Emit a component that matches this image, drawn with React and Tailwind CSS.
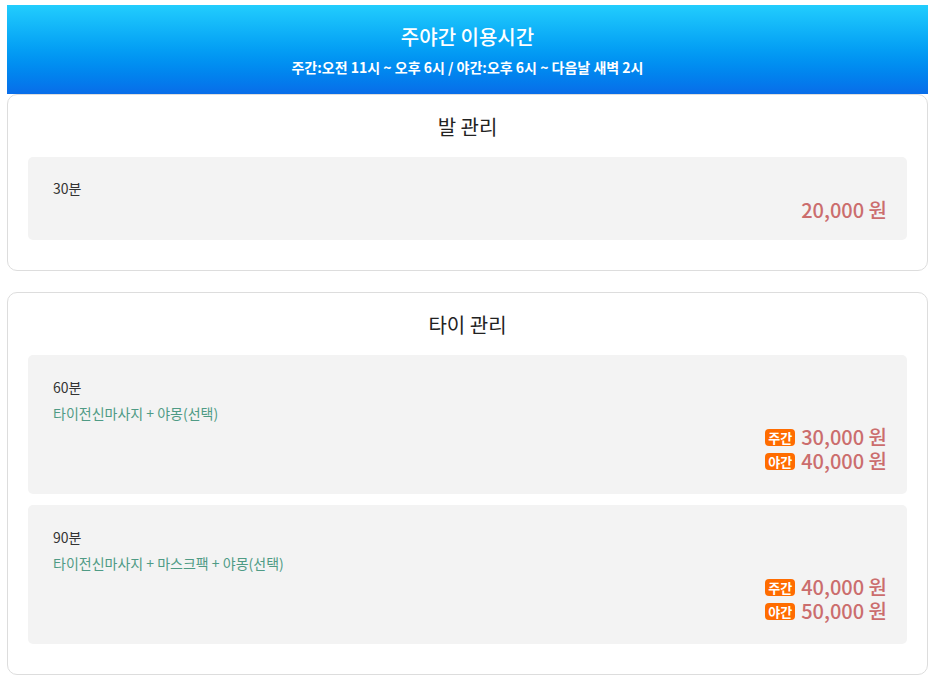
import React from 'react';

const font = { fontFamily: '"Noto Sans CJK KR", "Noto Sans", sans-serif' };

const sections = [
  {
    title: '발 관리',
    items: [{ time: '30분', price: '20,000 원' }],
  },
  {
    title: '타이 관리',
    items: [
      { time: '60분', desc: '타이전신마사지 + 야몽(선택)', day: '30,000 원', night: '40,000 원' },
      { time: '90분', desc: '타이전신마사지 + 마스크팩 + 야몽(선택)', day: '40,000 원', night: '50,000 원' },
    ],
  },
];

const Badge = ({ children }) => (
  <span className="inline-flex items-center justify-center h-[17px] px-[3px] mr-[6px] rounded-[4px] bg-[#ff6c00] text-white text-[13px] font-bold leading-[17px]">
    {children}
  </span>
);

const PriceLine = ({ badge, value }) => (
  <div className="flex items-center justify-end h-6">
    {badge && <Badge>{badge}</Badge>}
    <span className="text-[20px] font-medium text-[#cb6d6d] leading-6">{value}</span>
  </div>
);

export default function App() {
  return (
    <div style={font} className="px-[7px] pt-[5px] pb-[8px] bg-white">
      {/* header */}
      <div className="h-[89px] bg-gradient-to-b from-[#22cdfd] to-[#096de9] flex flex-col items-center justify-center text-white">
        <div className="text-[20px] font-medium leading-7">주야간 이용시간</div>
        <div className="text-[14px] font-semibold leading-5 mt-[6px]">
          주간:오전 11시 ~ 오후 6시 / 야간:오후 6시 ~ 다음날 새벽 2시
        </div>
      </div>

      <div className="flex flex-col gap-[21px]">
        {sections.map((s) => (
          <div key={s.title} className="border border-[#dddddd] rounded-[10px] px-5 pt-[18px] pb-[30px]">
            <div className="text-center text-[20px] text-[#222] leading-7 mb-[16px]">{s.title}</div>
            <div className="flex flex-col gap-[11px]">
              {s.items.map((it) => (
                <div key={it.time} className="bg-[#f3f3f3] rounded-[5px] pl-[25px] pr-5 py-5">
                  <div className={it.desc ? 'text-[14px] text-[#333] leading-6' : 'text-[14px] text-[#333] leading-[22px]'}>
                    {it.time}
                  </div>
                  {it.desc && (
                    <div className="text-[14px] text-[#4f9b85] leading-6 mt-0.5">{it.desc}</div>
                  )}
                  {it.price ? (
                    <div className="flex justify-end h-[21px]">
                      <span className="text-[20px] font-medium text-[#cb6d6d] leading-[22px]">{it.price}</span>
                    </div>
                  ) : (
                    <div className="pb-px">
                      <PriceLine badge="주간" value={it.day} />
                      <PriceLine badge="야간" value={it.night} />
                    </div>
                  )}
                </div>
              ))}
            </div>
          </div>
        ))}
      </div>
    </div>
  );
}
